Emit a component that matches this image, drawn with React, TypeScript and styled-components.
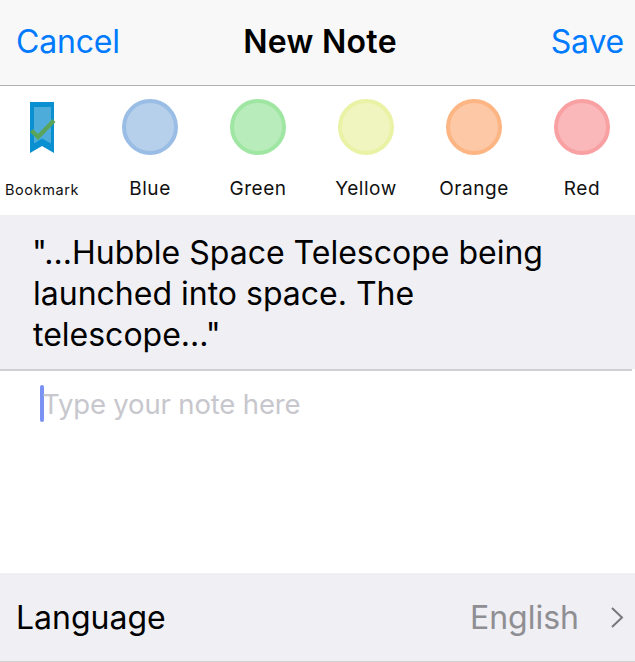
import React from "react";
import styled, { createGlobalStyle } from "styled-components";

const Global = createGlobalStyle`
  html, body { margin: 0; padding: 0; background: #fff; }
  body { font-family: Inter, "Liberation Sans", sans-serif; -webkit-font-smoothing: antialiased; }
`;

const Screen = styled.div`
  width: 635px;
  height: 662px;
  display: flex;
  flex-direction: column;
  overflow: hidden;
`;

const NavBar = styled.header`
  height: 85px;
  flex: none;
  display: grid;
  grid-template-columns: 1fr auto 1fr;
  align-items: center;
  padding: 0 11px 0 16px;
  background: #f8f8f8;
  border-bottom: 1px solid #b2b2b2;
`;

const NavButton = styled.span<{ $end?: boolean }>`
  justify-self: ${(p) => (p.$end ? "end" : "start")};
  color: #007aff;
  font-size: 32px;
  letter-spacing: -0.2px;
  line-height: 1;
  margin-top: -1px;
`;

const Title = styled.h1`
  margin: -1px 0 0;
  font-size: 32px;
  font-weight: 600;
  letter-spacing: 0.3px;
  line-height: 1;
  color: #000;
`;

const Palette = styled.div`
  flex: none;
  height: 129px;
  margin-left: -12px;
  width: 648px;
  display: grid;
  grid-template-columns: repeat(6, 108px);
`;

const Choice = styled.div`
  display: flex;
  flex-direction: column;
  align-items: center;
  padding-top: 13px;
`;

const IconSlot = styled.div`
  width: 56px;
  height: 56px;
  display: flex;
  justify-content: center;
  align-items: center;
`;

const Swatch = styled.div<{ $fill: string; $ring: string }>`
  width: 56px;
  height: 56px;
  box-sizing: border-box;
  border-radius: 50%;
  background: ${(p) => p.$fill};
  border: 4px solid ${(p) => p.$ring};
`;

const Label = styled.span<{ $small?: boolean }>`
  margin-top: ${(p) => (p.$small ? "21px" : "20px")};
  height: 28px;
  line-height: 28px;
  font-size: ${(p) => (p.$small ? "14.5px" : "19px")};
  letter-spacing: ${(p) => (p.$small ? "0.6px" : "0.55px")};
  color: #111;
`;

const Quote = styled.blockquote`
  flex: none;
  height: 154px;
  box-sizing: border-box;
  margin: 0;
  padding: 17px 60px 0 33px;
  background: #efeff4;
  font-size: 32px;
  line-height: 41px;
  text-indent: -1px;
  color: #000;
`;

const Divider = styled.div`
  flex: none;
  width: 632px;
  height: 2px;
  background: #d0d0d3;
`;

const NoteArea = styled.div`
  flex: 1;
  display: flex;
  align-items: flex-start;
  padding: 13px 0 0 40px;
`;

const Caret = styled.span`
  flex: none;
  width: 4px;
  height: 37px;
  border-radius: 2px;
  background: #7b92f5;
  margin-top: 1px;
`;

const Placeholder = styled.span`
  margin-left: -2px;
  font-size: 27.5px;
  line-height: 40px;
  letter-spacing: -0.15px;
  color: #c7c7cd;
`;

const LanguageRow = styled.div`
  flex: none;
  height: 88px;
  display: flex;
  align-items: center;
  padding: 0 11px 0 16px;
  background: #efeff4;
  border-bottom: 1px solid #d0d0d3;
`;

const RowLabel = styled.span`
  flex: 1;
  font-size: 32px;
  color: #000;
`;

const RowValue = styled.span`
  font-size: 32px;
  color: #8e8e93;
  margin-right: 31px;
`;

const Chevron = styled.svg`
  flex: none;
  width: 14px;
  height: 22px;
`;

const BookmarkIcon = () => (
  <svg width="28" height="56" viewBox="0 0 28 56" fill="none">
    <path d="M3 5H27V56L15 49L3 56Z" fill="#0a8fd0" transform="translate(-1 -2)" />
    <path d="M6 8H23V44.5L14 39.5L6 44.5Z" fill="#4dacd9" />
    <path d="M3.5 31.5L10 38L26 21.5" stroke="#5aa45a" strokeWidth="4.2" />
  </svg>
);

const colours = [
  { name: "Blue", fill: "#b6d0eb", ring: "#9abde6" },
  { name: "Green", fill: "#b8edbb", ring: "#9fe6a3" },
  { name: "Yellow", fill: "#f0f5bf", ring: "#e9f2a5" },
  { name: "Orange", fill: "#fcc8a6", ring: "#fdb583" },
  { name: "Red", fill: "#fab8bb", ring: "#f9a0a3" },
];

export default function App() {
  return (
    <Screen>
      <Global />
      <NavBar>
        <NavButton>Cancel</NavButton>
        <Title>New Note</Title>
        <NavButton $end>Save</NavButton>
      </NavBar>
      <Palette>
        <Choice>
          <IconSlot>
            <BookmarkIcon />
          </IconSlot>
          <Label $small>Bookmark</Label>
        </Choice>
        {colours.map((c) => (
          <Choice key={c.name}>
            <Swatch $fill={c.fill} $ring={c.ring} />
            <Label>{c.name}</Label>
          </Choice>
        ))}
      </Palette>
      <Quote>"...Hubble Space Telescope being launched into space. The telescope..."</Quote>
      <Divider />
      <NoteArea>
        <Caret />
        <Placeholder>Type your note here</Placeholder>
      </NoteArea>
      <LanguageRow>
        <RowLabel>Language</RowLabel>
        <RowValue>English</RowValue>
        <Chevron viewBox="0 0 14 22" fill="none">
          <path d="M2 2L12 11.5L2 21" stroke="#77777c" strokeWidth="2" />
        </Chevron>
      </LanguageRow>
    </Screen>
  );
}
